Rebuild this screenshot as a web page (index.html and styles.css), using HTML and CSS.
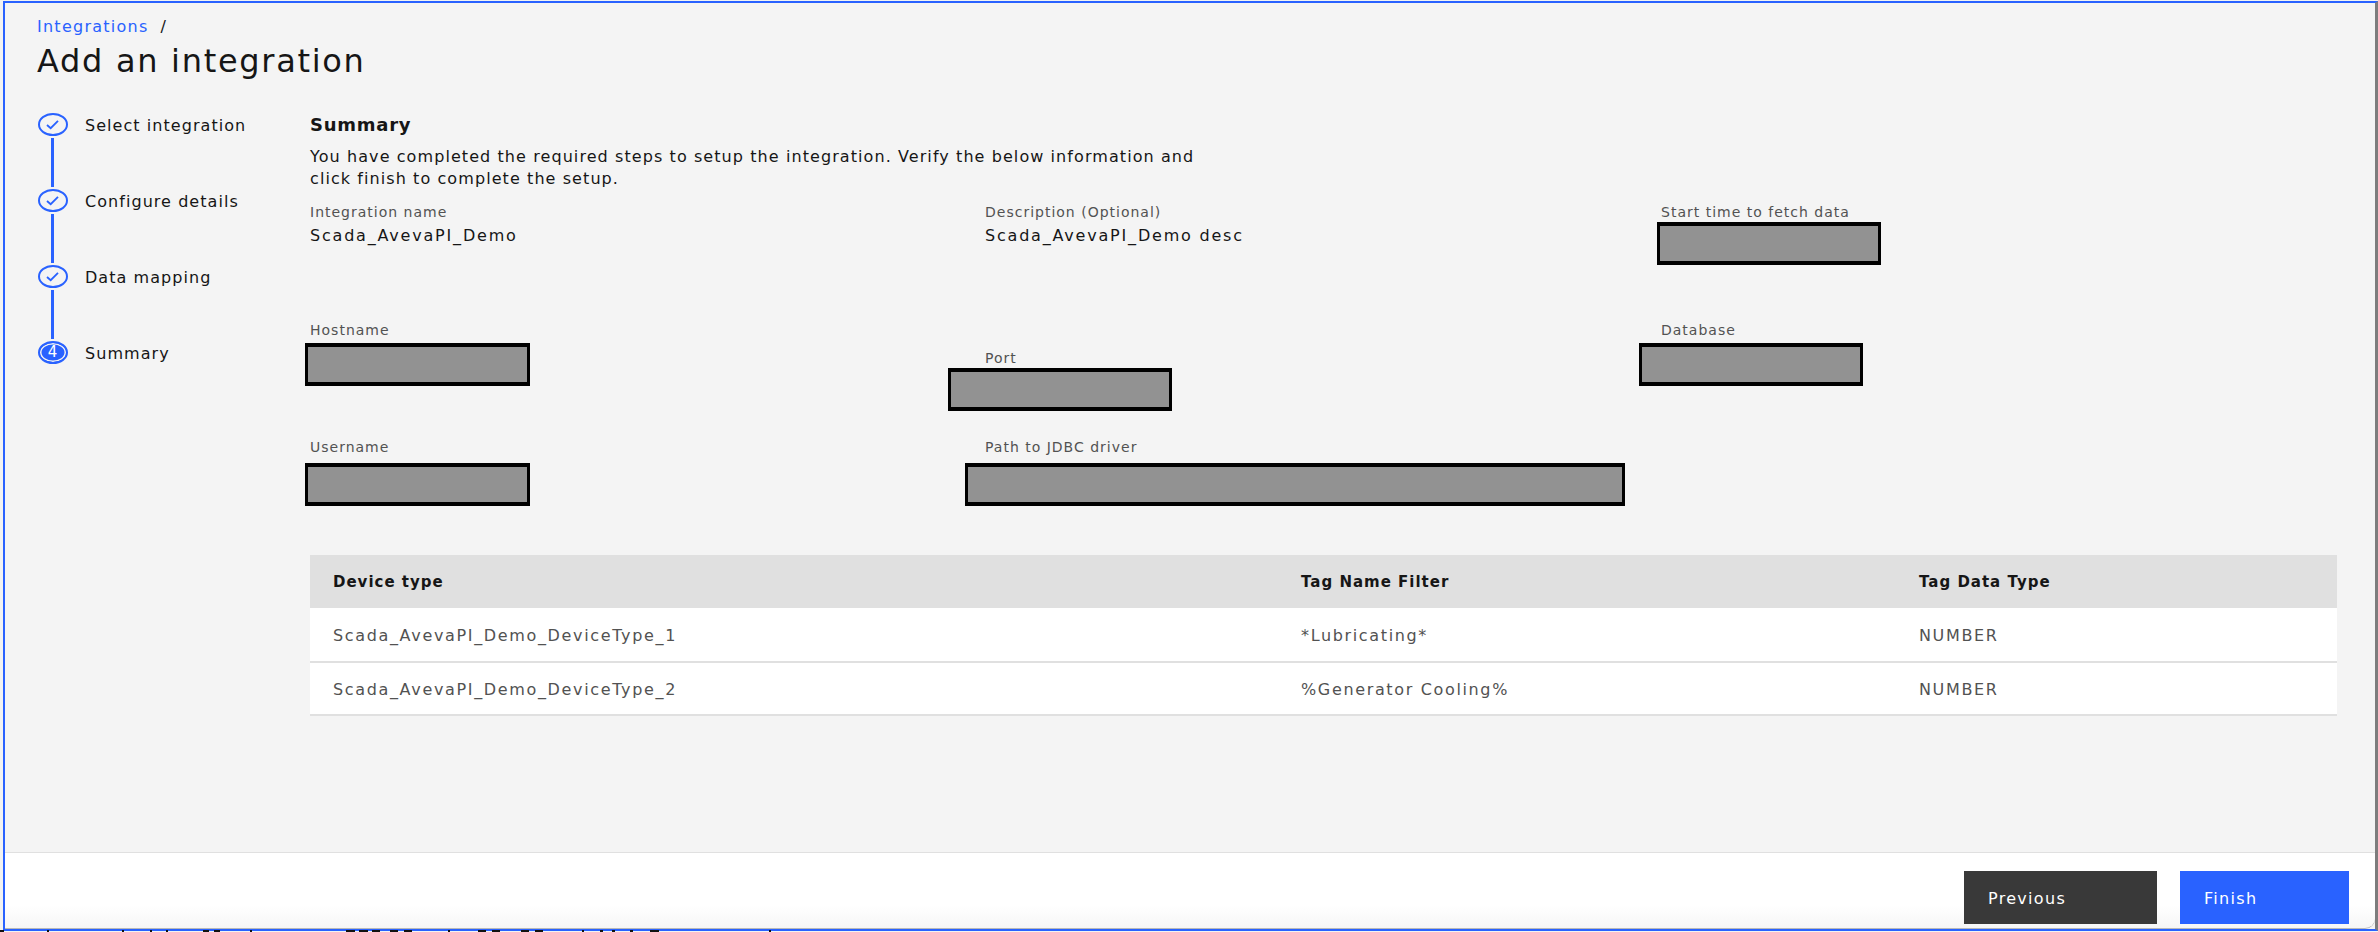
FILE: index.html
```html
<!DOCTYPE html>
<html lang="en">
<head>
<meta charset="utf-8">
<title>Add an integration</title>
<link rel="stylesheet" href="styles.css">
</head>
<body>
<div class="window">
  <main class="main">
    <header class="page-head">
      <nav class="crumbs"><a class="crumb-link">Integrations</a><span class="crumb-sep">/</span></nav>
      <h1 class="title">Add an integration</h1>
    </header>
    <div class="wizard">
      <ol class="steps">
        <li class="step">
          <div class="track">
            <span class="dot"><svg class="check" viewBox="0 0 16 12"><path d="M2 6.5 6 10 14 2"/></svg></span>
            <span class="line"></span>
          </div>
          <span class="step-label">Select integration</span>
        </li>
        <li class="step">
          <div class="track">
            <span class="dot"><svg class="check" viewBox="0 0 16 12"><path d="M2 6.5 6 10 14 2"/></svg></span>
            <span class="line"></span>
          </div>
          <span class="step-label">Configure details</span>
        </li>
        <li class="step">
          <div class="track">
            <span class="dot"><svg class="check" viewBox="0 0 16 12"><path d="M2 6.5 6 10 14 2"/></svg></span>
            <span class="line"></span>
          </div>
          <span class="step-label">Data mapping</span>
        </li>
        <li class="step">
          <div class="track">
            <span class="dot dot-current"><span class="dot-num">4</span></span>
          </div>
          <span class="step-label">Summary</span>
        </li>
      </ol>
      <section class="summary">
        <h2 class="summary-title">Summary</h2>
        <p class="summary-text">You have completed the required steps to setup the integration. Verify the below information and<br>click finish to complete the setup.</p>
        <div class="fields">
          <div class="field"><div class="field-label">Integration name</div><div class="field-value">Scada_AvevaPI_Demo</div></div>
          <div class="field"><div class="field-label">Description (Optional)</div><div class="field-value">Scada_AvevaPI_Demo desc</div></div>
          <div class="field"><div class="field-label">Start time to fetch data</div><div class="redact redact-start"></div></div>
          <div class="field"><div class="field-label">Hostname</div><div class="redact redact-host"></div></div>
          <div class="field field-port"><div class="field-label">Port</div><div class="redact redact-port"></div></div>
          <div class="field"><div class="field-label">Database</div><div class="redact redact-db"></div></div>
          <div class="field"><div class="field-label">Username</div><div class="redact redact-user"></div></div>
          <div class="field"><div class="field-label">Path to JDBC driver</div><div class="redact redact-path"></div></div>
        </div>
        <table class="grid">
          <colgroup><col class="col-a"><col class="col-b"><col class="col-c"></colgroup>
          <thead>
            <tr class="head-row"><th>Device type</th><th>Tag Name Filter</th><th>Tag Data Type</th></tr>
          </thead>
          <tbody>
            <tr class="row-one"><td>Scada_AvevaPI_Demo_DeviceType_1</td><td>*Lubricating*</td><td>NUMBER</td></tr>
            <tr class="row-two"><td>Scada_AvevaPI_Demo_DeviceType_2</td><td>%Generator Cooling%</td><td>NUMBER</td></tr>
          </tbody>
        </table>
      </section>
    </div>
  </main>
  <footer class="footer">
    <button class="btn btn-prev">Previous</button>
    <button class="btn btn-finish">Finish</button>
  </footer>
</div>
<svg class="under-strip" viewBox="0 0 800 2" aria-hidden="true">
  <rect x="0" y="0" width="4" height="2"/><rect x="47" y="0" width="2" height="2"/><rect x="122" y="0" width="2" height="2"/>
  <rect x="150" y="0" width="2" height="2"/><rect x="166" y="0" width="2" height="2"/><rect x="203" y="0" width="6" height="2"/><rect x="214" y="0" width="6" height="2"/>
  <rect x="250" y="0" width="2" height="2"/><rect x="346" y="0" width="9" height="2"/><rect x="359" y="0" width="9" height="2"/><rect x="372" y="0" width="8" height="2"/><rect x="390" y="0" width="8" height="2"/><rect x="404" y="0" width="8" height="2"/>
  <rect x="448" y="0" width="2" height="2"/><rect x="478" y="0" width="8" height="2"/><rect x="492" y="0" width="8" height="2"/><rect x="521" y="0" width="8" height="2"/><rect x="535" y="0" width="8" height="2"/>
  <rect x="582" y="0" width="2" height="2"/><rect x="600" y="0" width="3" height="2"/><rect x="612" y="0" width="3" height="2"/><rect x="630" y="0" width="3" height="2"/><rect x="650" y="0" width="9" height="2"/><rect x="769" y="0" width="2" height="2"/>
</svg>
</body>
</html>
```

FILE: styles.css
```css
* { box-sizing: border-box; }
html, body { margin: 0; padding: 0; height: 932px; overflow: hidden; }
body {
  position: relative;
  background: #f2f2f2;
  font-family: "DejaVu Sans", "Noto Sans", sans-serif;
  color: #161616;
}
.window {
  display: flex;
  flex-direction: column;
  width: 2375px;
  height: 930px;
  margin: 1px 0 0 3px;
  background: #f4f4f4;
  border-top: 2px solid #2962ff;
  border-left: 2px solid #2962ff;
  border-bottom: 2px solid #2962ff;
  border-right: 3px solid #7d7d7d;
}
.main { flex: 1; min-height: 0; padding: 15px 37px 0 32px; }
.crumbs { display: flex; gap: 12px; height: 18px; font-size: 16px; line-height: 18px; letter-spacing: 1.25px; }
.crumb-link { color: #2962ff; }
.crumb-sep { color: #161616; }
.title { margin: 5px 0 0; height: 40px; font-size: 32px; line-height: 40px; font-weight: 400; letter-spacing: 1.7px; }
.wizard { display: flex; margin-top: 32px; }
.steps { width: 273px; flex: none; margin: 0; padding: 0; list-style: none; }
.step { display: flex; gap: 17px; height: 76px; }
.track { display: flex; flex-direction: column; align-items: center; width: 31px; flex: none; }
.dot {
  display: flex; align-items: center; justify-content: center;
  width: 30px; height: 23px; flex: none;
  border: 2px solid #2962ff; border-radius: 50%;
}
.check { width: 15px; height: 11px; fill: none; stroke: #2962ff; stroke-width: 2; }
.dot-current { background: #2962ff; box-shadow: inset 0 0 0 1.5px #f4f4f4; }
.dot-num { color: #fff; font-size: 15px; line-height: 19px; }
.line { width: 3px; height: 49px; margin-top: 2px; background: #2962ff; }
.step-label { font-size: 16px; line-height: 26px; letter-spacing: 1.05px; }
.summary { flex: 1; min-width: 0; }
.summary-title { margin: 0; font-size: 18px; line-height: 24px; font-weight: 700; letter-spacing: 0.75px; }
.summary-text { margin: 9px 0 0; font-size: 16px; line-height: 22px; letter-spacing: 1.08px; }
.fields {
  display: grid;
  grid-template-columns: 675px 676px 1fr;
  grid-template-rows: 118px 117px 116px;
  margin-top: 14px;
}
.field-label { height: 18px; font-size: 14px; line-height: 17px; color: #525252; letter-spacing: 1px; }
.field-value { margin-top: 3px; font-size: 16px; line-height: 22px; letter-spacing: 1.8px; }
.field-port { padding-top: 28px; }
.redact { height: 43px; background: #929292; border-style: solid; border-color: #000; border-width: 4px 3px; }
.redact-start { width: 224px; margin-left: -4px; }
.redact-host { width: 225px; margin: 3px 0 0 -5px; }
.redact-port { width: 224px; margin-left: -37px; }
.redact-db { width: 224px; margin: 3px 0 0 -22px; }
.redact-user { width: 225px; margin: 6px 0 0 -5px; }
.redact-path { width: 660px; margin: 6px 0 0 -20px; }
.grid { width: 2027px; table-layout: fixed; border-collapse: collapse; }
.col-a { width: 968px; }
.col-b { width: 618px; }
.col-c { width: 441px; }
.grid th, .grid td { padding: 0 0 0 23px; text-align: left; }
.head-row { height: 53px; background: #e0e0e0; }
.grid th { font-size: 15px; font-weight: 700; color: #161616; letter-spacing: 1px; }
.row-one { height: 54px; background: #fff; }
.row-two { height: 53px; background: #fff; }
.grid td { padding-top: 2px; font-size: 16px; letter-spacing: 1.65px; color: #525252; border-bottom: 2px solid #e0e0e0; }
.footer {
  display: flex; justify-content: flex-end; align-items: flex-start; gap: 23px;
  flex: none; height: 77px;
  padding: 18px 26px 0 0;
  background: linear-gradient(#fff 70%, #f6f6f6);
  border-top: 1px solid #e0e0e0;
  border-bottom: 1px solid #b8b8b8;
  border-bottom-right-radius: 10px;
}
.btn {
  height: 53px; padding: 2px 0 0 24px; border: 0; text-align: left;
  color: #fff; font-family: inherit; font-size: 16px; font-weight: 400; letter-spacing: 1.3px;
}
.btn-prev { width: 193px; background: #393939; }
.btn-finish { width: 169px; background: #2962ff; }
.under-strip {
  position: absolute; left: 0; bottom: 0;
  display: block; width: 800px; height: 2px; fill: #111;
}
```
